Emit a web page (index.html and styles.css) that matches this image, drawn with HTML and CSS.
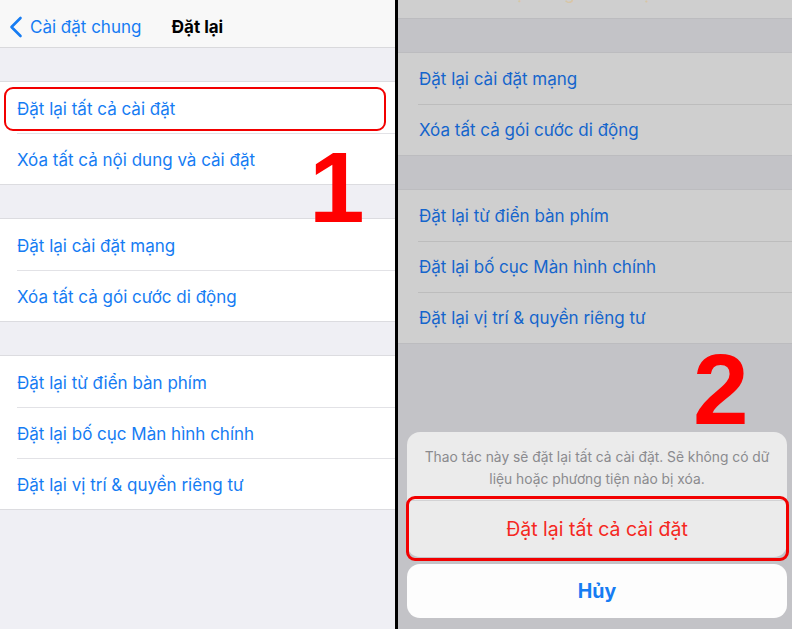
FILE: index.html
```html
<!DOCTYPE html>
<html lang="vi">
<head>
<meta charset="utf-8">
<title>Đặt lại</title>
<link rel="stylesheet" href="styles.css">
</head>
<body>
<main class="stage">
  <section class="panel panel-left">
    <header class="nav">
      <a class="back">
        <svg class="chev" width="14" height="22" viewBox="0 0 14 22"><path d="M11.5 2 L2.5 11 L11.5 20" fill="none" stroke="#167cf3" stroke-width="2.6" stroke-linecap="round" stroke-linejoin="round"/></svg>
        <span>Cài đặt chung</span>
      </a>
      <h1 class="title">Đặt lại</h1>
    </header>
    <div class="list">
      <div class="group">
        <div class="row row-hl">Đặt lại tất cả cài đặt</div>
        <div class="row">Xóa tất cả nội dung và cài đặt</div>
      </div>
      <div class="group">
        <div class="row">Đặt lại cài đặt mạng</div>
        <div class="row">Xóa tất cả gói cước di động</div>
      </div>
      <div class="group">
        <div class="row">Đặt lại từ điển bàn phím</div>
        <div class="row">Đặt lại bố cục Màn hình chính</div>
        <div class="row">Đặt lại vị trí &amp; quyền riêng tư</div>
      </div>
    </div>
    <span class="num num-1">1</span>
  </section>
  <div class="divider"></div>
  <section class="panel panel-right">
    <div class="list list-dim">
      <div class="group">
        <div class="row">Đặt lại tất cả cài đặt</div>
        <div class="row row-cut">Xóa tất cả nội dung và cài đặt</div>
      </div>
      <div class="group">
        <div class="row">Đặt lại cài đặt mạng</div>
        <div class="row">Xóa tất cả gói cước di động</div>
      </div>
      <div class="group">
        <div class="row">Đặt lại từ điển bàn phím</div>
        <div class="row">Đặt lại bố cục Màn hình chính</div>
        <div class="row">Đặt lại vị trí &amp; quyền riêng tư</div>
      </div>
    </div>
    <span class="num num-2">2</span>
    <div class="sheet">
      <div class="sheet-card">
        <p class="sheet-msg">Thao tác này sẽ đặt lại tất cả cài đặt. Sẽ không có dữ<br>liệu hoặc phương tiện nào bị xóa.</p>
        <div class="sheet-btn sheet-danger">Đặt lại tất cả cài đặt</div>
      </div>
      <div class="sheet-cancel">Hủy</div>
    </div>
  </section>
</main>
</body>
</html>
```
FILE: styles.css
```css
* { box-sizing: border-box; }
html, body { margin: 0; padding: 0; }
body {
  width: 792px;
  height: 629px;
  overflow: hidden;
  font-family: Inter, "Noto Sans", "Liberation Sans", sans-serif;
  background: #000;
}
.stage {
  display: flex;
  width: 792px;
  height: 629px;
}
.panel {
  position: relative;
  overflow: hidden;
  height: 629px;
}
.panel-left {
  width: 395px;
  background: #efeff4;
}
.divider {
  width: 3px;
  background: #000;
}
.panel-right {
  flex: 1;
  background: #c3c3c7;
}

/* nav */
.nav {
  position: relative;
  height: 48px;
  background: #f8f8f8;
  border-bottom: 1px solid #d9d9dc;
  display: flex;
  align-items: center;
  padding-top: 6px;
}
.back {
  display: flex;
  align-items: center;
  gap: 7px;
  padding-left: 9px;
  color: #167cf3;
  font-size: 17px;
}
.chev { display: block; margin-top: 0; }
.title {
  position: absolute;
  left: 0;
  right: 0;
  top: 6px;
  bottom: 0;
  margin: 0;
  display: flex;
  align-items: center;
  justify-content: center;
  font-size: 17px;
  font-weight: 700;
  color: #000;
  pointer-events: none;
}

/* list */
.group {
  margin-top: 33px;
  background: #fff;
  border-top: 1px solid #dcdce0;
  border-bottom: 1px solid #dcdce0;
}
.row {
  position: relative;
  height: 51px;
  display: flex;
  align-items: center;
  padding-left: 17px;
  padding-top: 2px;
  color: #167cf3;
  font-size: 17px;
}
.row + .row::before {
  content: "";
  position: absolute;
  left: 17px;
  right: 0;
  top: 0;
  height: 1px;
  background: #e2e2e6;
}
.row-hl::after {
  content: "";
  position: absolute;
  left: 4px;
  right: 9px;
  top: 5px;
  bottom: 2px;
  border: 2.5px solid #f20000;
  border-radius: 9px;
}

/* dimmed list on right */
.list-dim { margin-top: -118px; }
.list-dim .group {
  margin-top: 33px;
  background: #cfcfcf;
  border-color: #bcbcbf;
}
.list-dim .row {
  padding-left: 21px;
  padding-top: 1px;
  color: #1565cc;
}
.list-dim .row + .row::before {
  left: 20px;
  background: #bdbdbd;
}
.list-dim .row-cut { color: #d9c6a6; }

/* big numerals */
.num {
  position: absolute;
  font-family: "Liberation Sans", Arial, sans-serif;
  font-weight: 700;
  font-size: 100px;
  line-height: 1;
  color: #ff0000;
}
.num-1 { left: 309px; top: 137px; }
.num-2 { left: 295px; top: 339px; }

/* action sheet */
.sheet {
  position: absolute;
  left: 9px;
  right: 5px;
  bottom: 11px;
  display: flex;
  flex-direction: column;
  gap: 7px;
}
.sheet-card {
  background: #ebebeb;
  border-radius: 13px;
}
.sheet-msg {
  margin: 0;
  padding: 14px 8px 10px;
  text-align: center;
  font-size: 13.8px;
  line-height: 22px;
  color: #8a8a8e;
}
.sheet-btn {
  position: relative;
  height: 57px;
  border-top: 1px solid #d2d2d4;
  display: flex;
  align-items: center;
  justify-content: center;
  font-size: 19.5px;
}
.sheet-danger { color: #f5281f; }
.sheet-danger::after {
  content: "";
  position: absolute;
  left: -1px;
  right: -2px;
  top: -5px;
  bottom: -4px;
  border: 3px solid #f20000;
  border-radius: 9px;
}
.sheet-cancel {
  height: 54px;
  background: #fdfdfd;
  border-radius: 13px;
  display: flex;
  align-items: center;
  justify-content: center;
  color: #167cf3;
  font-size: 19.5px;
  font-weight: 700;
}
```
